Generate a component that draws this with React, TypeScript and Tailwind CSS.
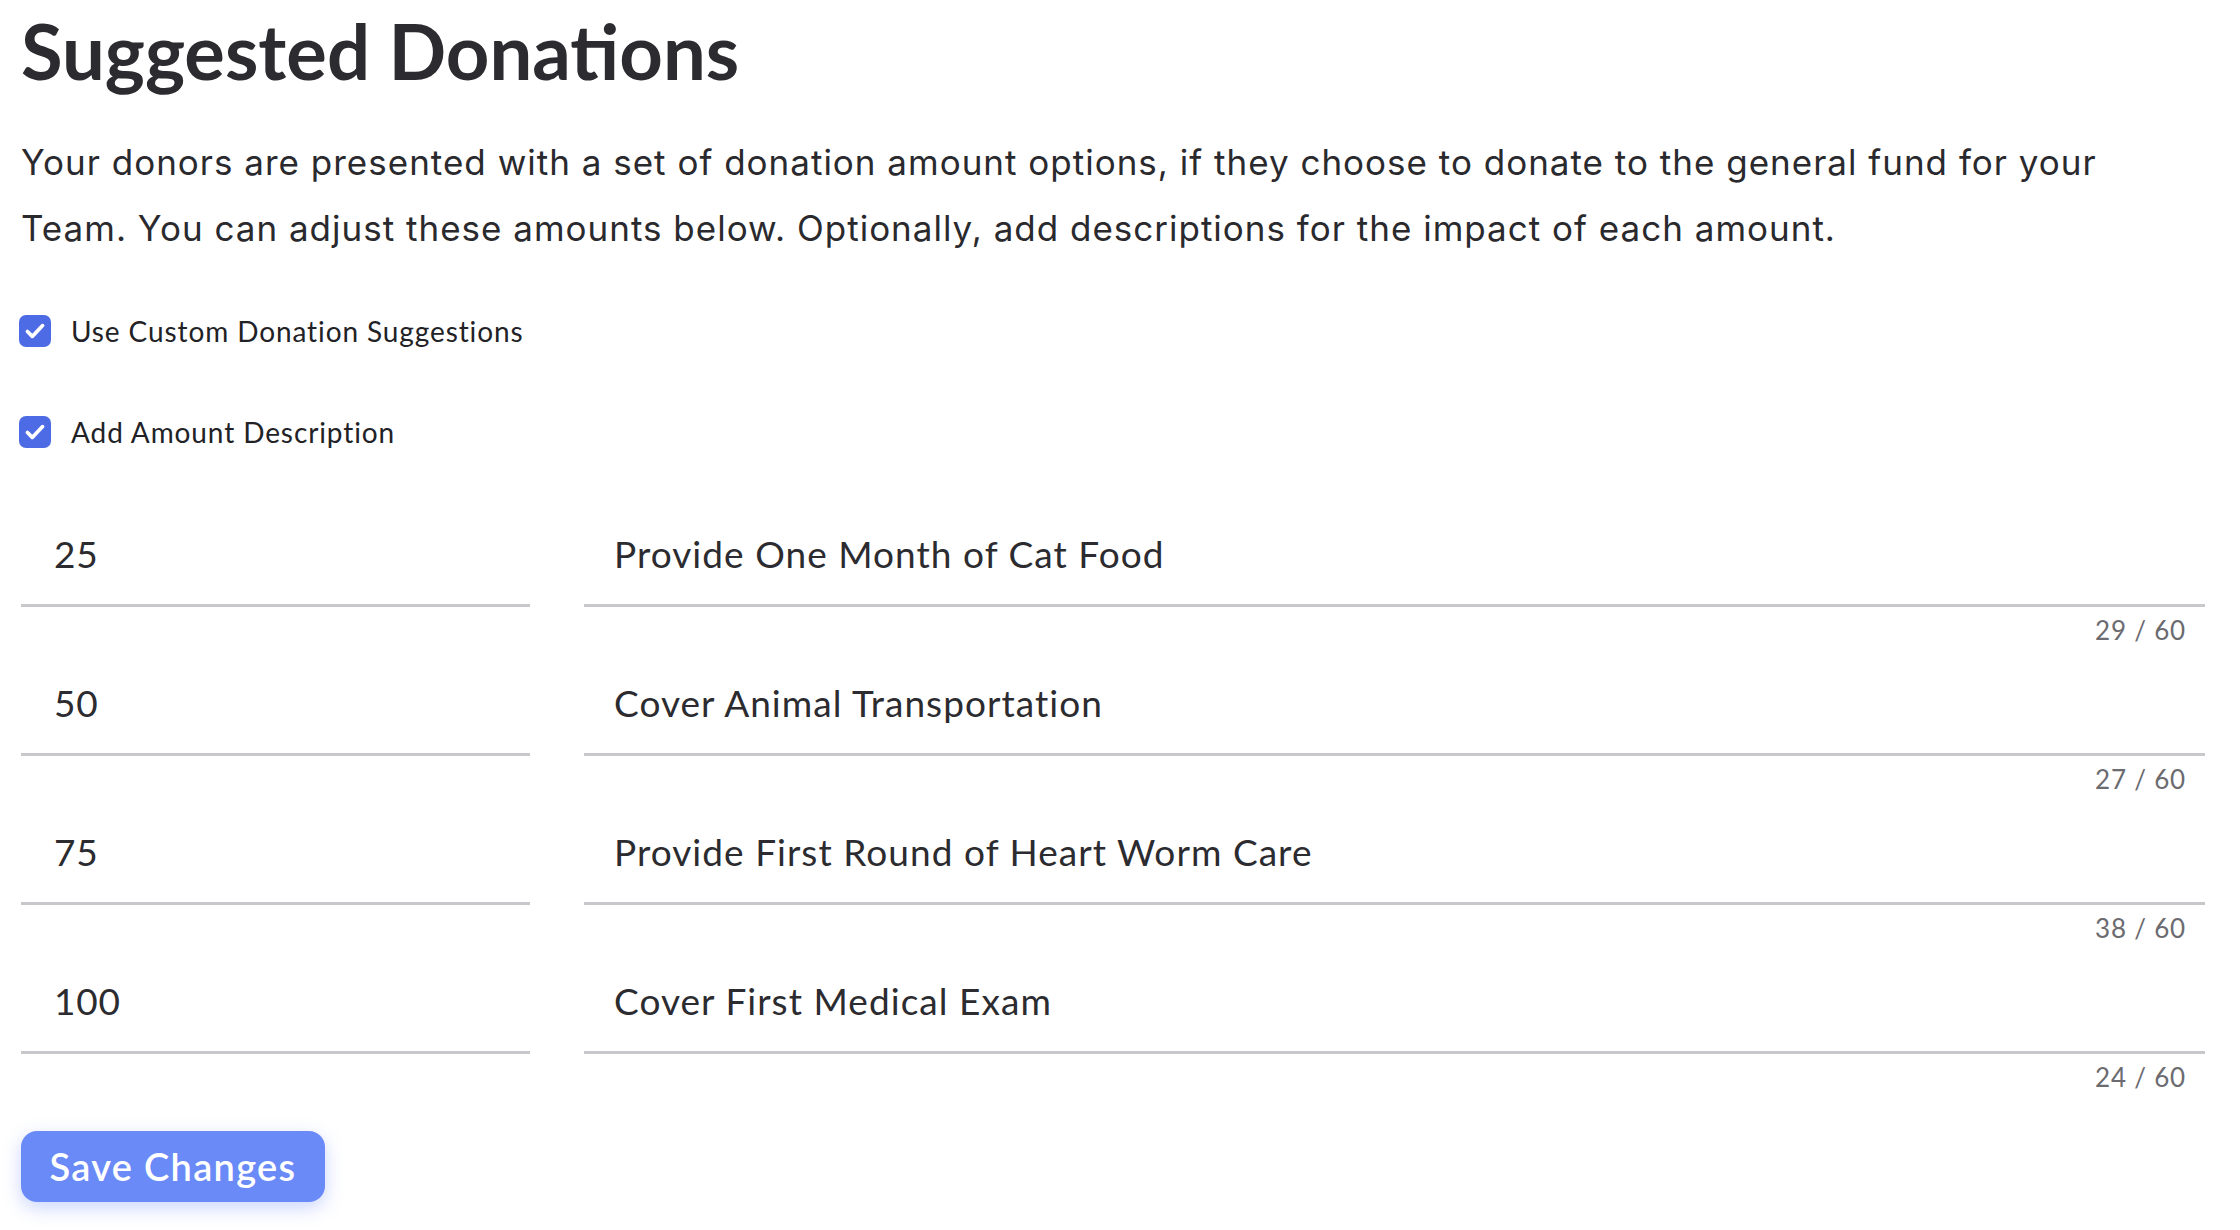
import React from "react";

const rows = [
  { amount: "25", desc: "Provide One Month of Cat Food" },
  { amount: "50", desc: "Cover Animal Transportation" },
  { amount: "75", desc: "Provide First Round of Heart Worm Care" },
  { amount: "100", desc: "Cover First Medical Exam" },
];

function Check({ label }: { label: string }) {
  return (
    <div className="flex h-[56px] items-center gap-[20px]">
      <div className="-ml-[2px] flex h-[32px] w-[32px] items-center justify-center rounded-[7px] bg-[#4e6be6]">
        <svg viewBox="0 0 24 24" className="h-[26px] w-[26px]" fill="none" stroke="white" strokeWidth="3.4" strokeLinecap="round" strokeLinejoin="round">
          <path d="M5 12.5l4.5 4.5L19 7" />
        </svg>
      </div>
      <span className="text-[28px] tracking-[0.9px] text-[#222226]">{label}</span>
    </div>
  );
}

export default function App() {
  return (
    <div className="min-h-screen bg-white pl-[21px] pr-[35px] font-['Lato',sans-serif] text-[#2b2b30]">
      <h1 className="pt-[13px] text-[76px] font-bold leading-[76px] text-[#2b2b30]">Suggested Donations</h1>
      <p className="mt-[40px] font-['Inter',sans-serif] text-[35px] leading-[66px] tracking-[1px] text-[#2a2a2e]">
        Your donors are presented with a set of donation amount options, if they choose to donate to the general fund for your
        <br />
        Team. You can adjust these amounts below. Optionally, add descriptions for the impact of each amount.
      </p>
      <div className="mt-[42px] flex flex-col gap-[45px]">
        <Check label="Use Custom Donation Suggestions" />
        <Check label="Add Amount Description" />
      </div>
      <div className="mt-[44px] grid grid-cols-[509px_1fr] gap-x-[54px]">
        {rows.map((r) => (
          <React.Fragment key={r.amount}>
            <div className="flex h-[103px] items-center border-b-[3px] border-[#c8c8cc] pl-[33px] text-[37px] tracking-[0.8px] text-[#2b2b30]">
              {r.amount}
            </div>
            <div>
              <div className="flex h-[103px] items-center border-b-[3px] border-[#c8c8cc] pl-[30px] text-[37px] tracking-[1.05px] text-[#2b2b30]">
                {r.desc}
              </div>
              <div className="flex h-[46px] items-center justify-end pr-[19px] text-[26px] tracking-[0.8px] text-[#6b6b70]">
                {r.desc.length} / 60
              </div>
            </div>
          </React.Fragment>
        ))}
      </div>
      <button className="mt-[31px] flex h-[71px] w-[304px] items-center justify-center rounded-[16px] bg-[#6a8af8] text-[38px] font-semibold tracking-[1.3px] text-white shadow-[0_6px_18px_rgba(106,138,248,0.35)]">
        Save Changes
      </button>
    </div>
  );
}
